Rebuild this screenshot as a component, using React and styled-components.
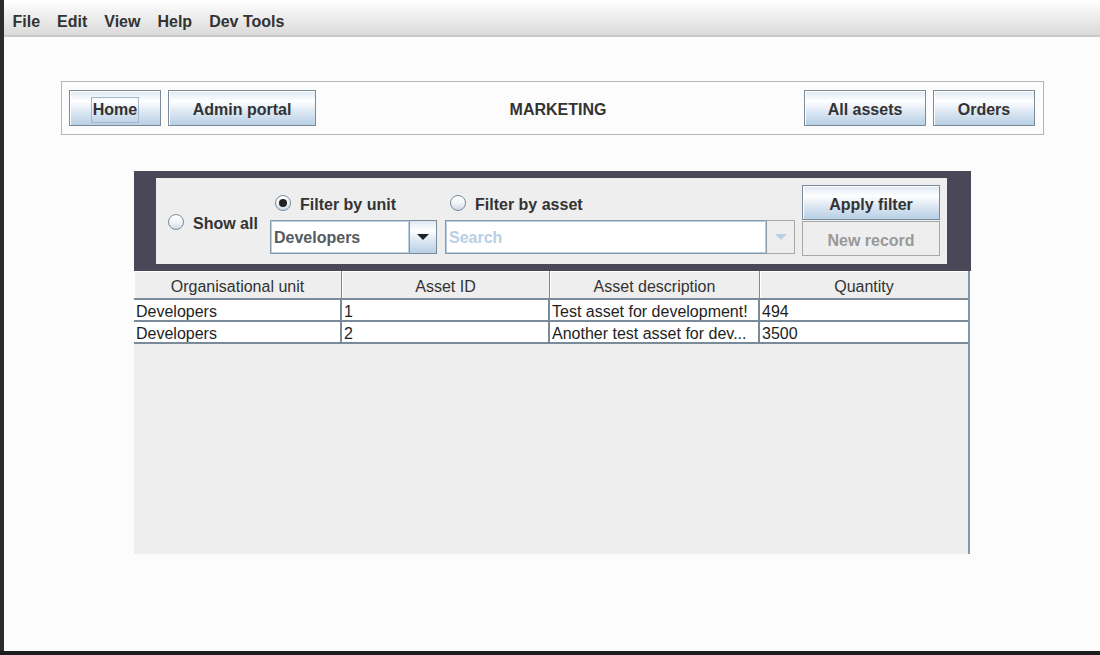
import React from "react";
import styled, { createGlobalStyle } from "styled-components";

const Global = createGlobalStyle`
  html, body { margin: 0; padding: 0; background: #1e1e1e; }
  body { font-family: "Liberation Sans", Arial, sans-serif; }
  * { box-sizing: border-box; }
`;

const OCEAN = "linear-gradient(to bottom, #dde8f3 0%, #ffffff 30%, #dde8f3 60%, #b8cfe5 100%)";

const Screen = styled.div`
  width: 1100px;
  height: 655px;
  background: #1e1e1e;
  overflow: hidden;
`;

const Desk = styled.div`
  display: flex;
  height: 651px;
`;

const LeftEdge = styled.div`
  width: 4px;
  flex: none;
  background: #2b2b2b;
`;

const Window = styled.div`
  flex: 1;
  background: #fcfcfc;
  display: flex;
  flex-direction: column;
`;

const MenuBar = styled.div`
  height: 37px;
  flex: none;
  display: flex;
  align-items: center;
  padding-top: 8px;
  background: linear-gradient(to bottom, #ffffff, #dadada);
  border-bottom: 2px solid #c8c8c8;
`;

const MenuItem = styled.span`
  padding: 0 8.5px;
  font-weight: bold;
  font-size: 16px;
  color: #333;
`;

const NavPanel = styled.div`
  margin: 44px 56px 0 57px;
  border: 1px solid #b4b4b4;
  padding: 8px 8px 8px 7px;
  display: flex;
  align-items: center;
  gap: 7px;
`;

const Button = styled.button`
  height: 35px;
  width: ${(p) => p.$w}px;
  flex: none;
  display: flex;
  align-items: center;
  justify-content: center;
  padding: 4px 0 0;
  font-family: inherit;
  font-weight: bold;
  font-size: 16px;
  color: ${(p) => (p.$disabled ? "#999999" : "#333333")};
  background: ${(p) => (p.$disabled ? "#eeeeee" : OCEAN)};
  border: 1px solid ${(p) => (p.$disabled ? "#a8a8a8" : "#7a8a99")};
  box-shadow: ${(p) => (p.$disabled ? "none" : "inset 1px 1px 0 #ffffff")};
`;

const NavButton = styled(Button)`
  height: 36px;
  padding-top: 3px;
`;

const FocusRing = styled.span`
  border: 1px solid #a3b8cc;
  padding: 3px 1px;
  line-height: 18px;
`;

const Title = styled.div`
  flex: 1;
  padding-top: 3px;
  padding-right: 4px;
  text-align: center;
  font-weight: bold;
  font-size: 16px;
  color: #333;
`;

const Card = styled.div`
  margin: 36px 0 0 130px;
  width: 837px;
`;

const FilterBar = styled.div`
  background: #4a4858;
  padding: 7px 24px 7px 22px;
`;

const FilterPanel = styled.div`
  background: #eeeeee;
  height: 86px;
  display: flex;
  align-items: flex-start;
`;

const ShowAll = styled.label`
  margin: 0 0 0 12px;
  padding-top: 2px;
  width: 102px;
  flex: none;
  align-self: center;
  display: flex;
  align-items: center;
  gap: 9px;
  font-weight: bold;
  font-size: 16px;
  color: #333;
`;

const Radio = styled.span`
  width: 16px;
  height: 16px;
  flex: none;
  border-radius: 50%;
  border: 1px solid #7a8a99;
  background: linear-gradient(to bottom, #ffffff 0%, #f2f5f8 50%, #cfdae6 100%);
  display: flex;
  align-items: center;
  justify-content: center;
  &::after {
    content: "";
    display: ${(p) => (p.$checked ? "block" : "none")};
    width: 8px;
    height: 8px;
    border-radius: 50%;
    background: #222;
  }
`;

const RadioText = styled.span`
  padding-top: 3px;
`;

const FilterGrid = styled.div`
  margin-top: 13px;
  display: grid;
  grid-template-columns: 167px 350px;
  grid-template-rows: 24px 34px;
  column-gap: 8px;
  row-gap: 5px;
  flex: none;
`;

const OptionLabel = styled.label`
  padding-left: 5px;
  display: flex;
  align-items: center;
  gap: 9px;
  font-weight: bold;
  font-size: 16px;
  color: #333;
`;

const Combo = styled.div`
  display: flex;
  height: 34px;
`;

const Editor = styled.div`
  flex: 1;
  min-width: 0;
  background: #ffffff;
  border: 1px solid #8a99a6;
  box-shadow: inset 0 0 0 1px #b8cfe5;
  display: flex;
  align-items: center;
  padding: 2px 0 0 3px;
  font-weight: bold;
  font-size: 16px;
  color: ${(p) => (p.$placeholder ? "#b8cfe5" : "#555a60")};
`;

const ArrowButton = styled.div`
  width: ${(p) => p.$w}px;
  flex: none;
  border: 1px solid ${(p) => (p.$disabled ? "#a8a8a8" : "#7a8a99")};
  border-left: none;
  background: ${(p) => (p.$disabled ? "#eeeeee" : OCEAN)};
  display: flex;
  align-items: center;
  justify-content: center;
  &::after {
    content: "";
    width: 0;
    height: 0;
    border-left: 6px solid transparent;
    border-right: 6px solid transparent;
    border-top: 6px solid ${(p) => (p.$disabled ? "#b8cfe5" : "#222")};
  }
`;

const ButtonStack = styled.div`
  margin: 7px 0 0 7px;
  width: 138px;
  flex: none;
  display: flex;
  flex-direction: column;
  gap: 1px;
`;

const ScrollArea = styled.div`
  width: 836px;
  height: 283px;
  background: #eeeeee;
  border-right: 2px solid #8497ab;
`;

const COLS = "208px 208px 210px 208px";

const HeaderRow = styled.div`
  display: grid;
  grid-template-columns: ${COLS};
  height: 29px;
  border-bottom: 2px solid #7a8a99;
`;

const HeaderCell = styled.div`
  background: #eeeeee;
  border-right: ${(p) => (p.$last ? "none" : "1px solid #7a8a99")};
  box-shadow: inset 1px 1px 0 #ffffff;
  display: flex;
  align-items: center;
  justify-content: center;
  padding-top: 4px;
  font-size: 16px;
  color: #333;
`;

const Row = styled.div`
  display: grid;
  grid-template-columns: ${COLS};
  height: 22px;
  border-bottom: 2px solid #7a8a99;
  background: #ffffff;
`;

const Cell = styled.div`
  border-right: ${(p) => (p.$last ? "none" : "2px solid #7a8a99")};
  padding: 2px 0 0 2px;
  line-height: 20px;
  font-size: 16px;
  color: #1e1e1e;
  white-space: nowrap;
  overflow-x: clip;
  overflow-y: visible;
`;

const columns = ["Organisational unit", "Asset ID", "Asset description", "Quantity"];
const rows = [
  ["Developers", "1", "Test asset for development!", "494"],
  ["Developers", "2", "Another test asset for dev...", "3500"],
];

export default function App() {
  return (
    <Screen>
      <Global />
      <Desk>
        <LeftEdge />
        <Window>
          <MenuBar>
            {["File", "Edit", "View", "Help", "Dev Tools"].map((m) => (
              <MenuItem key={m}>{m}</MenuItem>
            ))}
          </MenuBar>

          <NavPanel>
            <NavButton $w={92}>
              <FocusRing>Home</FocusRing>
            </NavButton>
            <NavButton $w={148}>Admin portal</NavButton>
            <Title>MARKETING</Title>
            <NavButton $w={122}>All assets</NavButton>
            <NavButton $w={102}>Orders</NavButton>
          </NavPanel>

          <Card>
            <FilterBar>
              <FilterPanel>
                <ShowAll>
                  <Radio />
                  <RadioText>Show all</RadioText>
                </ShowAll>
                <FilterGrid>
                  <OptionLabel>
                    <Radio $checked />
                    <RadioText>Filter by unit</RadioText>
                  </OptionLabel>
                  <OptionLabel>
                    <Radio />
                    <RadioText>Filter by asset</RadioText>
                  </OptionLabel>
                  <Combo>
                    <Editor>Developers</Editor>
                    <ArrowButton $w={27} />
                  </Combo>
                  <Combo>
                    <Editor $placeholder>Search</Editor>
                    <ArrowButton $w={28} $disabled />
                  </Combo>
                </FilterGrid>
                <ButtonStack>
                  <Button $w={138}>Apply filter</Button>
                  <Button $w={138} $disabled>
                    New record
                  </Button>
                </ButtonStack>
              </FilterPanel>
            </FilterBar>
            <ScrollArea>
              <HeaderRow>
                {columns.map((c, i) => (
                  <HeaderCell key={c} $last={i === columns.length - 1}>
                    {c}
                  </HeaderCell>
                ))}
              </HeaderRow>
              {rows.map((r, ri) => (
                <Row key={ri}>
                  {r.map((v, i) => (
                    <Cell key={i} $last={i === r.length - 1}>
                      {v}
                    </Cell>
                  ))}
                </Row>
              ))}
            </ScrollArea>
          </Card>
        </Window>
      </Desk>
    </Screen>
  );
}
